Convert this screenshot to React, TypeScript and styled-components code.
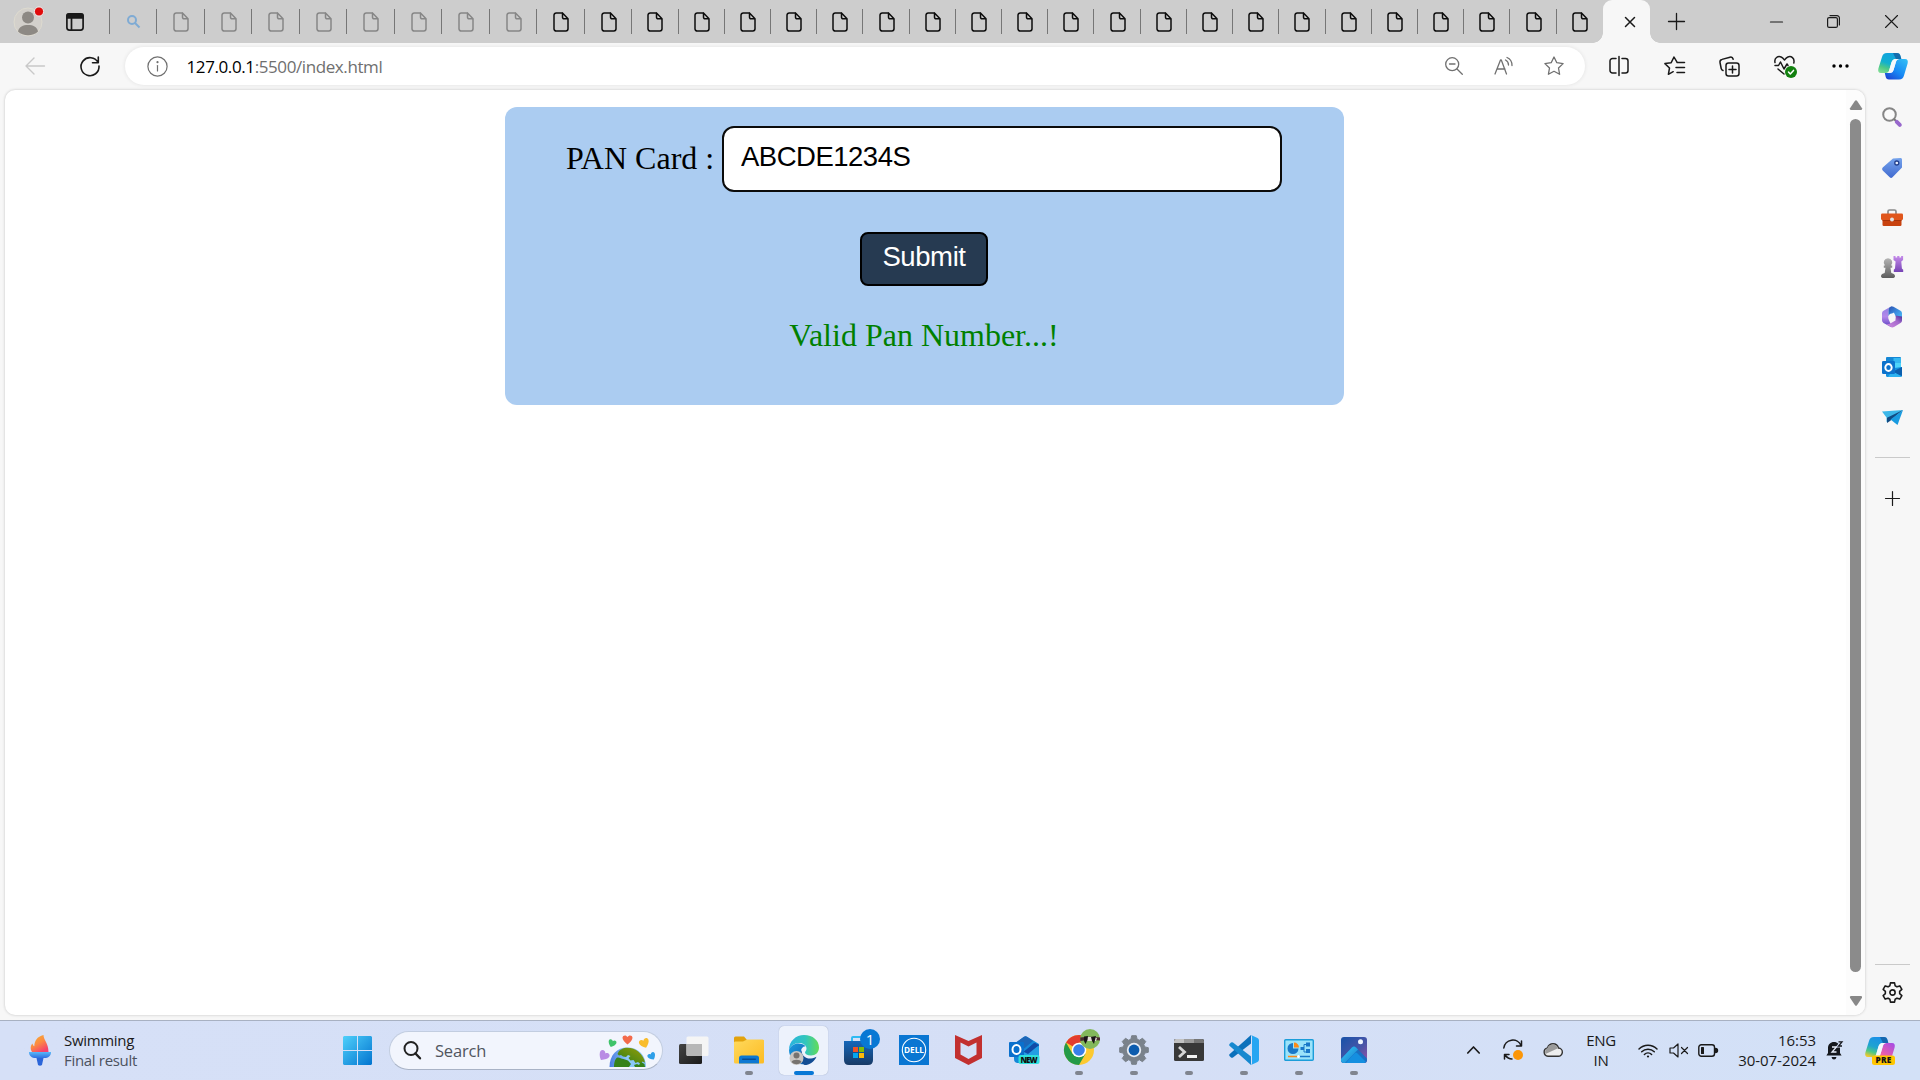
import React from "react";
import styled, { createGlobalStyle } from "styled-components";

const GlobalStyle = createGlobalStyle`
  * { box-sizing: border-box; }
  body { margin: 0; overflow: hidden; background: #f7f7f7; }
  svg { display: block; flex: none; overflow: visible; }
`;

const uiFont = `"Open Sans", "Noto Sans", sans-serif`;

const Desktop = styled.div`
  width: 1920px;
  height: 1080px;
  display: flex;
  flex-direction: column;
  overflow: hidden;
  background: #f7f7f7;
  font-family: ${uiFont};
  color: #1a1a1a;
`;

/* ---------- tab strip ---------- */
const TabStrip = styled.header`
  height: 43px;
  flex: none;
  display: flex;
  align-items: stretch;
  background: #cdcdcd;
`;
const Slot = styled.div<{ $w: number; $left?: number; $color?: string }>`
  width: ${(p) => p.$w}px;
  margin-left: ${(p) => p.$left ?? 0}px;
  color: ${(p) => p.$color ?? "inherit"};
  flex: none;
  display: flex;
  align-items: center;
  justify-content: center;
`;
const Tab = styled.div<{ $w: number; $faded?: boolean; $last?: boolean }>`
  width: ${(p) => p.$w}px;
  flex: none;
  display: flex;
  align-items: center;
  justify-content: center;
  color: ${(p) => (p.$faded ? "#868686" : "#0c0c0c")};
  background: linear-gradient(#767676, #767676) 100% 9px / ${(p) => (p.$last ? 0 : 1)}px 25px no-repeat;
`;
const FirstDivider = styled.div`
  width: 1px;
  height: 25px;
  margin: 9px 0 0 17px;
  flex: none;
  background: #767676;
`;
const ActiveTab = styled.div`
  position: relative;
  width: 47px;
  flex: none;
  display: flex;
  align-items: center;
  justify-content: center;
  padding-left: 8px;
  background: #f7f7f7;
  border-radius: 9px 9px 0 0;
  &::before,
  &::after {
    content: "";
    position: absolute;
    bottom: 0;
    width: 10px;
    height: 10px;
  }
  &::before {
    left: -10px;
    background: radial-gradient(circle at 0 0, transparent 9.5px, #f7f7f7 10px);
  }
  &::after {
    right: -10px;
    background: radial-gradient(circle at 100% 0, transparent 9.5px, #f7f7f7 10px);
  }
`;
const Spacer = styled.div`
  flex: 1;
`;

/* ---------- toolbar ---------- */
const Toolbar = styled.div`
  height: 47px;
  flex: none;
  display: flex;
  align-items: center;
  padding-bottom: 1px;
`;
const AddressBar = styled.div`
  width: 1460px;
  height: 38px;
  flex: none;
  display: flex;
  align-items: center;
  padding: 0 6px 0 22px;
  border-radius: 19px;
  background: #fff;
  box-shadow: 0 0 4px rgba(0, 0, 0, 0.09);
  color: #707070;
`;
const Url = styled.div`
  margin: 0 auto 0 18.5px;
  font-size: 17px;
  letter-spacing: -0.4px;
  color: #6f6f6f;
  white-space: nowrap;
  b {
    font-weight: 400;
    color: #000;
  }
`;

/* ---------- page ---------- */
const Middle = styled.div`
  height: 930px;
  flex: none;
  display: flex;
  padding-left: 5px;
`;
const Viewport = styled.main`
  width: 1860px;
  height: 925px;
  flex: none;
  display: flex;
  border-radius: 10px;
  overflow: hidden;
  background: #fff;
  box-shadow: 0 0 3px rgba(0, 0, 0, 0.22);
`;
const Page = styled.div`
  flex: 1;
  display: flex;
  justify-content: center;
  align-items: flex-start;
  padding: 17px 2px 0 0;
`;
const Card = styled.form`
  width: 839px;
  height: 298px;
  border-radius: 12px;
  background: #abccf1;
  display: flex;
  flex-direction: column;
  align-items: center;
  padding: 19px 1px 0 0;
  font-family: "Liberation Serif", serif;
  font-size: 32px;
`;
const Field = styled.label`
  width: 716px;
  display: flex;
  align-items: center;
  justify-content: space-between;
  color: #000;
  white-space: nowrap;
  > span {
    margin-top: -2px;
  }
`;
const PanInput = styled.input`
  width: 560px;
  height: 66px;
  border: 2px solid #0b0b0b;
  border-radius: 12px;
  background: #fff;
  padding: 0 17px 4px;
  font-family: "Liberation Sans", Arial, sans-serif;
  font-size: 27.5px;
  letter-spacing: -0.5px;
  color: #000;
  outline: 0;
`;
const SubmitButton = styled.button`
  width: 128px;
  height: 54px;
  margin-top: 40px;
  padding: 0 0 4px;
  border: 2px solid #000;
  border-radius: 8px;
  background: #263a51;
  color: #fff;
  font-family: "Liberation Sans", Arial, sans-serif;
  font-size: 27.5px;
  letter-spacing: -0.4px;
`;
const Message = styled.p`
  margin: 31px 0 0;
  line-height: 36px;
  color: #008000;
`;
const Scrollbar = styled.div`
  width: 19px;
  display: flex;
  flex-direction: column;
  align-items: center;
  padding: 10px 0 9px;
  background: #fcfcfc;
`;
const Thumb = styled.div`
  width: 11px;
  height: 853px;
  margin: 9px 0 auto;
  border-radius: 6px;
  background: #8b8b8b;
`;
const Sidebar = styled.aside`
  flex: 1;
  display: flex;
  flex-direction: column;
  align-items: center;
  padding: 2px 1px 0 0;
`;
const SideItem = styled.div<{ $h: number }>`
  height: ${(p) => p.$h}px;
  flex: none;
  display: flex;
  align-items: center;
  justify-content: center;
`;
const Rule = styled.div`
  width: 35px;
  height: 1px;
  flex: none;
  background: #cacaca;
`;

/* ---------- taskbar ---------- */
const Taskbar = styled.footer`
  height: 60px;
  flex: none;
  display: flex;
  align-items: center;
  padding-bottom: 1px;
  border-top: 1px solid #a8b1c2;
  background: linear-gradient(90deg, #d6e0f7, #d5dff6 60%, #d3e1f7);
`;
const Widget = styled.div`
  width: 313px;
  display: flex;
  align-items: center;
  gap: 13px;
  padding-left: 29px;
`;
const TwoLines = styled.div<{ $align?: string; $w?: number; $ls?: number }>`
  width: ${(p) => (p.$w ? p.$w + "px" : "auto")};
  text-align: ${(p) => p.$align ?? "left"};
  font-size: 15px;
  line-height: 20px;
  letter-spacing: ${(p) => p.$ls ?? -0.2}px;
  white-space: nowrap;
  flex: none;
  span {
    display: block;
  }
`;
const Muted = styled.span`
  color: #4c525e;
`;
const SearchBox = styled.div`
  width: 274px;
  height: 39px;
  margin-left: 3px;
  flex: none;
  display: flex;
  align-items: center;
  gap: 14px;
  padding: 0 6px 0 13px;
  border: 1px solid #c2cde0;
  border-bottom-color: #a9b3c6;
  border-radius: 20px;
  background: #f2f5fd;
  font-size: 16.5px;
  letter-spacing: -0.2px;
  color: #51555f;
  svg:last-child {
    margin: 2px 0 0 auto;
  }
`;
const Apps = styled.div`
  display: flex;
  gap: 6px;
  margin-left: 6px;
`;
const AppButton = styled.div<{ $active?: boolean }>`
  position: relative;
  width: 49px;
  height: 49px;
  display: flex;
  align-items: center;
  justify-content: center;
  border-radius: 5px;
  background: ${(p) => (p.$active ? "#edf2fc" : "transparent")};
  box-shadow: ${(p) => (p.$active ? "0 0 1px #8c9ab4" : "none")};
`;
const Indicator = styled.i<{ $active?: boolean }>`
  position: absolute;
  bottom: 0;
  left: 50%;
  transform: translateX(-50%);
  width: ${(p) => (p.$active ? 20 : 8)}px;
  height: 4px;
  border-radius: 2px;
  background: ${(p) => (p.$active ? "#0878d6" : "#80858f")};
`;
const Badge = styled.span`
  position: absolute;
  top: 3px;
  right: 3px;
  width: 20px;
  height: 20px;
  border-radius: 50%;
  background: #0878d4;
  color: #fff;
  font-size: 15px;
  line-height: 20px;
  text-align: center;
`;
const Tray = styled.div`
  margin-left: auto;
  padding-right: 14px;
  display: flex;
  align-items: center;
`;

/* ---------- drawings ---------- */
type SvgProps = { w: number; h: number; vb?: string; children: React.ReactNode; sw?: number };
const Line = ({ w, h, vb, children, sw = 1.4 }: SvgProps) => (
  <svg width={w} height={h} viewBox={vb ?? `0 0 ${w} ${h}`} fill="none" stroke="currentColor" strokeWidth={sw} strokeLinecap="round" strokeLinejoin="round">
    {children}
  </svg>
);
const Pic = ({ w, h, vb, children }: SvgProps) => (
  <svg width={w} height={h} viewBox={vb ?? `0 0 ${w} ${h}`}>{children}</svg>
);

const PageIcon = () => (
  <Line w={16} h={20} sw={1.5}>
    <path d="M9.500 1H3.200A2.200 2.200 0 0 0 1 3.200v13.600A2.200 2.200 0 0 0 3.200 19h9.600a2.200 2.200 0 0 0 2.200-2.200V6.800L9.500 1v4.300A1.500 1.500 0 0 0 11 6.800h4" />
  </Line>
);

const Profile = () => (
  <Pic w={30} h={30}>
    <circle cx="15" cy="15" r="14" fill="#d3d0cb" stroke="#dedbd0" />
    <circle cx="15" cy="10.500" r="6" fill="#8d8984" />
    <path d="M5 24.500c1-5 5-6.500 10-6.500s9 1.500 10 6.500c-5 5-15 5-20 0z" fill="#8d8984" />
    <circle cx="26" cy="4.500" r="4.600" fill="#e00b0b" stroke="#eee" />
  </Pic>
);

const Copilot = ({ pre }: { pre?: boolean }) => {
  const id = pre ? "p" : "c";
  return (
    <Pic w={30} h={29} vb="0 1 30 29">
      <defs>
        <linearGradient id={id + "a"} x1="0.600" y1="0" x2="0.200" y2="1">
          <stop offset="0" stopColor={pre ? "#1a8fe8" : "#12a2df"} />
          <stop offset="0.500" stopColor={pre ? "#1fa3d0" : "#10b0d0"} />
          <stop offset="0.750" stopColor="#4cc887" />
          <stop offset="1" stopColor={pre ? "#f4c92c" : "#7fdc94"} />
        </linearGradient>
        <linearGradient id={id + "b"} x1="1" y1="0" x2="0.200" y2="1">
          <stop offset="0" stopColor={pre ? "#a04be8" : "#35c2f5"} />
          <stop offset="0.600" stopColor={pre ? "#ef5fa8" : "#1789f5"} />
          <stop offset="1" stopColor={pre ? "#ff9b54" : "#1c49d4"} />
        </linearGradient>
      </defs>
      <path d="M9 2h10c2 0 3 1 3.500 3l.8 3H18c-3 0-4 2-4.700 4l-2 7c-.6 2-1.500 3-3.300 3H3c-2.500 0-3.300-2-2.600-4.500L4 6c.8-2.500 2-4 5-4z" fill={`url(#${id}a)`} />
      <path d="M15 2h4c2 0 3 1 3.500 3l.8 3H18z" fill="#145a9c" opacity=".75" />
      <path d="M21 28.500H11c-2 0-3-1-3.400-3L6.800 22H11c3 0 4-1 4.700-3.500l2.200-7.500c.6-2 1.600-3 3.600-3H27c2.500 0 3.300 2 2.600 4.500L26 24.500c-.8 2.500-2 4-5 4z" fill={`url(#${id}b)`} />
      <path d="M13.300 12c.7-2.500 2-4 4.700-4h3c-2 .3-2.600 1.500-3.100 3l-2.200 7.500C15 21 14 22 11 22H9c1.300-.4 2-1.300 2.300-3z" fill="#f5f8fb" />
      {pre && (
        <>
          <rect x="7" y="20.500" width="23" height="9.500" rx="2.500" fill="#ffc600" />
          <text x="18.500" y="28.200" textAnchor="middle" fontFamily="Open Sans" fontWeight="800" fontSize="8.200" letterSpacing="0.300" fill="#151515">PRE</text>
        </>
      )}
    </Pic>
  );
};

const gearPath = (n: number, r1: number, r2: number) => {
  const pts: string[] = [];
  for (let i = 0; i < n; i++) {
    const a = (i * 2 * Math.PI) / n - Math.PI / 2;
    const s = Math.PI / n;
    [[-0.72, r2], [-0.4, r1], [0.4, r1], [0.72, r2]].forEach(([k, r]) => {
      pts.push(`${(15 + Math.cos(a + k * s) * r).toFixed(2)} ${(15 + Math.sin(a + k * s) * r).toFixed(2)}`);
    });
  }
  return `M${pts.join("L")}Z`;
};

const TagIcon = () => (
  <Pic w={20} h={20}>
    <defs><linearGradient id="tag" x1="0" y1="0" x2="0" y2="1"><stop stopColor="#75a3ec" /><stop offset="1" stopColor="#426bd0" /></linearGradient></defs>
    <path d="M11 .6 18.500 0a1.400 1.400 0 0 1 1.500 1.500v8L10.500 19.200a2 2 0 0 1-2.800 0L.7 12.400a2 2 0 0 1 0-2.800z" fill="url(#tag)" />
    <circle cx="14.800" cy="5" r="2" fill="#e9f1ff" stroke="#24408c" strokeWidth="1.300" />
  </Pic>
);
const Toolbox = () => (
  <Pic w={22} h={17}>
    <path d="M7 5V2.500Q7 1 8.500 1h5Q15 1 15 2.500V5" fill="none" stroke="#8b8b8b" strokeWidth="1.700" />
    <rect x="1.500" y="8" width="19" height="9" rx="1.200" fill="#c8420f" />
    <rect x="0" y="4.500" width="22" height="6.500" rx="1.200" fill="#e0561c" />
    <rect x="1.500" y="11" width="19" height="1" fill="#a9340b" />
    <circle cx="11" cy="10.500" r="2" fill="#e1e1e1" />
  </Pic>
);
const Chess = () => (
  <Pic w={22} h={22}>
    <defs>
      <linearGradient id="rook" x1="0" y1="0" x2="0" y2="1"><stop stopColor="#c58bea" /><stop offset="1" stopColor="#7644b5" /></linearGradient>
      <linearGradient id="pawn" x1="0" y1="0" x2="0" y2="1"><stop stopColor="#b5b5b5" /><stop offset="1" stopColor="#5d5d5d" /></linearGradient>
    </defs>
    <path d="M12.500 0h2v1.500h1.700V0h2.200v1.500h1.700V0h2v4l-1.800 1.500.6 7 1.300 1.300V16h-9.400v-2.200l1.200-1.300.6-7L12.500 4z" fill="url(#rook)" />
    <path d="M7 2.200a4.200 4.200 0 0 1 3 7.200h1.200v2.400H9.500l.8 5.200c2 .3 3.700 1.500 3.700 3 0 1.400-1 2-2.500 2h-9C1 22 0 21.400 0 20c0-1.500 1.700-2.700 3.700-3l.8-5.200H2.800V9.400H4a4.200 4.200 0 0 1 3-7.200z" fill="url(#pawn)" />
  </Pic>
);
const M365 = () => (
  <Pic w={20} h={22}>
    <defs>
      <linearGradient id="ml" x1="0" y1="0" x2="0" y2="1"><stop stopColor="#8f7fe4" /><stop offset=".5" stopColor="#b489ea" /><stop offset="1" stopColor="#5b3fc0" /></linearGradient>
      <linearGradient id="mr" x1="0" y1="0" x2="1" y2="1"><stop stopColor="#2a4fae" /><stop offset=".5" stopColor="#3b8ee0" /><stop offset="1" stopColor="#4cc3f8" /></linearGradient>
      <linearGradient id="mb" x1="0" y1="1" x2="1" y2="0"><stop stopColor="#d08be0" /><stop offset=".6" stopColor="#a569cc" /><stop offset="1" stopColor="#46309b" /></linearGradient>
    </defs>
    <path d="M9 .4 6.500 3v10L10 21q-1 0-2-.5l-6.500-3.600Q0 16 0 14.300V7.200Q0 5.500 1.500 4.700z" fill="url(#ml)" />
    <path d="M6.500 10V3.500Q7 1 9.500.3q1.200 0 2 .4l7 4Q20 5.500 20 7.200V14l-6.500-3L12 6.500z" fill="url(#mr)" />
    <path d="M20 10.500v4q0 1.600-1.500 2.500L12 21q-2 1-4-.5l-3.500-2Q8 18 10 16.500l3.500-2v-5z" fill="url(#mb)" />
    <circle cx="10" cy="11" r="3.500" fill="#f7f7f7" />
  </Pic>
);
const OutlookArt = () => (
  <Pic w={20} h={20}>
    <rect x="4" y="0" width="15" height="13" rx="1" fill="#1587d5" />
    <path d="M11.500 1H19v5h-7.500z" fill="#35b8f1" /><path d="M11.500 6H19v5h-7.500z" fill="#4ed4fb" />
    <path d="M4 18.500V12l16-2v8.500q0 1.500-1.500 1.500h-13Q4 20 4 18.500z" fill="#1490df" />
    <path d="m10 15 10-5v9z" fill="#0b5fae" />
    <path d="m10 14 9.600 5.500-1.200.5H6z" fill="#2cb2f0" />
    <rect x="0" y="4" width="13" height="13" rx="1.300" fill="#0c72cc" />
    <ellipse cx="6.500" cy="10.500" rx="3.200" ry="3.500" fill="none" stroke="#fff" strokeWidth="1.900" />
  </Pic>
);
const Plane = () => (
  <Pic w={21} h={15}>
    <path d="M0 1.500 21 0 8 8.500 4.500 12V7.500z" fill="#3cb7e9" />
    <path d="M21 0 5 7.800V13l3-2z" fill="#114b83" />
    <path d="M21 0 8.500 9.500 15.500 15z" fill="#199be0" />
  </Pic>
);

const Torch = () => (
  <Pic w={22} h={31}>
    <defs>
      <linearGradient id="fl" x1="0" y1="0" x2="0.600" y2="1"><stop stopColor="#f6b42f" /><stop offset=".55" stopColor="#fb8a43" /><stop offset="1" stopColor="#f5426c" /></linearGradient>
      <linearGradient id="cup" x1="0" y1="0" x2="0" y2="1"><stop stopColor="#58b8f8" /><stop offset="1" stopColor="#2f6fe0" /></linearGradient>
    </defs>
    <path d="M14.500 0C14.500 5 19.500 8 19.500 17H3c-2-3-1.500-6.500.5-8.500.3 1.500.8 2.300 1.800 2.700C5.500 6 8 1.500 14.500 0z" fill="url(#fl)" />
    <path d="M0 17h22c0 4-3 6-6.500 6h-9C3 23 0 21 0 17z" fill="url(#cup)" />
    <path d="M7.500 23h7L13 30q-2 1.500-4 0z" fill="#2b65d9" />
  </Pic>
);
const WindowsLogo = () => (
  <Pic w={29} h={29}>
    <defs><linearGradient id="win" gradientUnits="userSpaceOnUse" x1="0" y1="0" x2="29" y2="29"><stop stopColor="#4fd0fb" /><stop offset="1" stopColor="#0274cf" /></linearGradient></defs>
    <path d="M1 0h13v14H0V1zM15 0h13l1 1v13H15zM0 15h14v14H1l-1-1zM15 15h14v13l-1 1H15z" fill="url(#win)" />
  </Pic>
);
const Heart = ({ x, y, s, c, r = 0 }: { x: number; y: number; s: number; c: string; r?: number }) => (
  <path transform={`translate(${x} ${y}) rotate(${r}) scale(${s})`} d="M0 4.500C-3 2.500-5-.2-5-2.200-5-5-1.300-5.500 0-3 1.300-5.500 5-5 5-2.200 5-.2 3 2.500 0 4.500z" fill={c} />
);
const Doodle = () => (
  <Pic w={57} h={32}>
    <defs>
      <linearGradient id="sea"><stop stopColor="#4a7be0" /><stop offset=".5" stopColor="#8fcbfa" /><stop offset="1" stopColor="#7dbff4" /></linearGradient>
      <linearGradient id="land" gradientUnits="userSpaceOnUse" x1="36" y1="12" x2="24" y2="32"><stop stopColor="#86990a" /><stop offset="1" stopColor="#2d7d19" /></linearGradient>
    </defs>
    <path d="M10.500 32C10.500 20 18 12.500 28.500 12.500S47 20 47 32z" fill="url(#sea)" />
    <path d="M20 16c2-2 5-3 7-3.300 5-.3 9 1 12.500 4 3.500 3 6 7 6.500 11l-2.500-1.200-2 2.500-2.500-2-2.500 1-2-3-3 .5-2-2.500 2-2-2.500-1-2 2-3-.5-2-1.500-2 .5-1.500-1.500z" fill="url(#land)" />
    <path d="M15 32c0-5 1.500-9 3.500-9.500 2-.5 3.500 1.500 6 1.500l4.500 1.500 3 3.500-2 3zM36 32l-1-2 3-1 2 1 2-3 3.500 2 .5 3z" fill="#35821a" />
    <Heart x={28.500} y={5} s={1} c="#f36a4b" />
    <Heart x={13} y={8.500} s={0.8} c="#3fc36a" r={20} />
    <Heart x={45.500} y={8.500} s={1} c="#f9bd2d" r={-20} />
    <Heart x={4.500} y={21} s={1.05} c="#b98be4" r={35} />
    <Heart x={53} y={21.500} s={0.8} c="#2f9fe8" r={-30} />
  </Pic>
);

const TaskView = () => (
  <Pic w={30} h={30}>
    <defs><linearGradient id="tv" x1="0" y1="0" x2="1" y2="1"><stop stopColor="#444" /><stop offset="1" stopColor="#1b1b1b" /></linearGradient></defs>
    <rect y="9" width="23" height="20" rx="1.500" fill="url(#tv)" />
    <rect x="7.500" y="1.500" width="22" height="19.500" rx="1.500" fill="#f5f5f5" />
    <path d="M7.500 9H23v12H9q-1.500 0-1.500-1.500z" fill="#b7b7b7" />
  </Pic>
);
const Folder = () => (
  <Pic w={30} h={28}>
    <defs><linearGradient id="fo" x1="0" y1="0" x2="1" y2="1"><stop stopColor="#ffd95c" /><stop offset="1" stopColor="#fcbb22" /></linearGradient></defs>
    <path d="M0 2Q0 .5 1.500.5H10L13 4h15.500Q30 4 30 5.500V10H0z" fill="#e2a20c" />
    <path d="M0 6.500Q0 5.500 1.500 5.500H9L13 3.500h15.500Q30 3.500 30 5v21q0 1.500-1.500 1.500h-27Q0 27.500 0 26z" fill="url(#fo)" />
    <path d="M5 27.500V22q0-2.500 2.500-2.500h15Q25 19.500 25 22v5.500z" fill="#0d78d2" />
    <rect x="8" y="22.500" width="14" height="1.500" rx=".7" fill="#084c95" />
  </Pic>
);
const Edge = () => (
  <Pic w={30} h={30}>
    <defs>
      <linearGradient id="e1"><stop stopColor="#2ab3e0" /><stop offset=".55" stopColor="#31c6bd" /><stop offset="1" stopColor="#64dc57" /></linearGradient>
      <linearGradient id="e2" x1="0" y1="0" x2="1" y2="1"><stop stopColor="#1b9cde" /><stop offset="1" stopColor="#0c5ab0" /></linearGradient>
    </defs>
    <path d="M0 15C0 6 7 0 15 0c9 0 15 5.500 15 12.500 0 5-3.500 8-8 8-4 0-6-1.500-6-3 0-1 1.500-1.600 1.500-4 0-3-3-5.500-7-5.500C5 8 1.500 11 0 15z" fill="url(#e1)" />
    <path d="M0 15c1.500-4 5-6.500 9.500-6.500 3 0 5.500 1 7 2.700-3 0-5 3-4.500 7 1 6 5 8.500 8 9.500-10 5-20-2.700-20-12.700z" fill="url(#e2)" />
    <path d="M12.500 15c0 6 4.500 9 9.500 8.500 2.500-.2 4-1 5.500-1.800C25.500 26.500 20.500 30 15.500 30 11 27 10 20 12.500 15z" fill="#134d93" />
    <circle cx="7.500" cy="23" r="7" fill="#c9c6c2" />
    <circle cx="7.500" cy="20.500" r="3" fill="#77736f" />
    <path d="M2.500 27c1-3 9-3 10 0-3 3-7 3-10 0z" fill="#77736f" />
  </Pic>
);
const Store = () => (
  <Pic w={29} h={30}>
    <defs><linearGradient id="st" x1="0" y1="0" x2="0" y2="1"><stop stopColor="#1667ba" /><stop offset="1" stopColor="#183a66" /></linearGradient></defs>
    <path d="M8 7V3q0-1 1-1h11q1 0 1 1v4" fill="none" stroke="#2ebaf2" strokeWidth="2" />
    <path d="M0 6h29v19q0 5-5 5H5q-5 0-5-5z" fill="url(#st)" />
    <path d="M9 12h5v5H9z" fill="#f35325" /><path d="M15 12h5v5h-5z" fill="#81bc06" /><path d="M9 18h5v5H9z" fill="#05a6f0" /><path d="M15 18h5v5h-5z" fill="#ffba08" />
  </Pic>
);
const Dell = () => (
  <Pic w={30} h={30}>
    <path d="M0 0h30v30H0z" fill="#0976d2" />
    <circle cx="15" cy="15" r="11.700" fill="none" stroke="#fff" strokeWidth="1.100" />
    <text x="15" y="17.800" textAnchor="middle" fontFamily="Open Sans" fontWeight="700" fontSize="8" textLength="20" lengthAdjust="spacingAndGlyphs" fill="#fff">DELL</text>
  </Pic>
);
const McAfee = () => (
  <Pic w={27} h={30}><path d="m0 0 13.500 6L27 0v23l-13.500 7L0 23zm5.500 7.500v12l8 4.500 8-4.500v-12l-8 4z" fill="#c2302f" fillRule="evenodd" /></Pic>
);
const OutlookNew = () => (
  <Pic w={30} h={28}>
    <path d="M5 8 15 .8q1.500-1 3 0L30 8v15q0 4-4 4H9q-4 0-4-4z" fill="#1488d8" />
    <path d="M5 8 15 .8q1.500-1 3 0L24 5 11 16H5z" fill="#1c66b8" />
    <path d="m13 17 13-10 4 2.500L18 22z" fill="#1047a1" /><path d="M13 17 30 9.500V24H13z" fill="#239fe3" /><path d="m15 16 10-9 5 2-11 9z" fill="#114ba7" />
    <rect y="6" width="15" height="15" rx="1" fill="#0a70cd" />
    <ellipse cx="7.500" cy="13.500" rx="4" ry="4.500" fill="none" stroke="#fff" strokeWidth="2" />
    <rect x="9.500" y="19" width="21" height="9" rx="2" fill="#2fe0dc" />
    <text x="20" y="26.500" textAnchor="middle" fontFamily="Open Sans" fontWeight="800" fontSize="7.800" textLength="17" fill="#101010">NEW</text>
  </Pic>
);
const Chrome = () => (
  <Pic w={30} h={30}>
    <circle cx="15" cy="15" r="15" fill="#fcc931" />
    <path d="M15 15 2 7.500A15 15 0 0 1 28 7.500H15z" fill="#e33b2e" />
    <path d="M2 7.500A15 15 0 0 0 15 30l6.500-11.300L15 15 8.500 18.700z" fill="#249a48" />
    <circle cx="15" cy="15" r="7.300" fill="#fff" /><circle cx="15" cy="15" r="5.800" fill="#397fe9" />
    <circle cx="26" cy="4" r="10" fill="#83b85b" />
    <path d="M16.200 2.500Q26 1 36 2.500v3q-10-1-19.700.500z" fill="#4a2c31" />
    <path d="M21 2h9l3 1-1 3H21z" fill="#e3ddd6" />
    <path d="m20 1.500 4-.5-.5 4-2 4-1.500-3zM27 2l5-1-1 4-1 4-2-3z" fill="#1b1518" />
  </Pic>
);
const SettingsApp = () => (
  <Pic w={30} h={30}>
    <path d={gearPath(8, 14.5, 11.2)} fill="#7a828b" stroke="#7a828b" strokeWidth="1" strokeLinejoin="round" />
    <circle cx="15" cy="15" r="7.200" fill="#e8edf5" /><circle cx="15" cy="15" r="5.400" fill="#0c5cae" />
  </Pic>
);
const Terminal = () => (
  <Pic w={30} h={22}>
    <rect width="30" height="22" rx="1.500" fill="#383838" />
    <path d="M1.500 0H10v4H0V1.500z" fill="#c2c2c2" /><path d="M10 0h10v4H10z" fill="#9b9b9b" /><path d="M20 0h8.500L30 1.500V4H20z" fill="#757575" />
    <path d="m5 8 5.500 5L5 18" fill="none" stroke="#d5d5d5" strokeWidth="2.800" /><path d="M13 16h10v3H13z" fill="#f2f2f2" />
  </Pic>
);
const VsCode = () => (
  <Pic w={30} h={30}>
    <path d="M22 0v8.500L4 22.500q-1 .7-2 0L.5 21q-.8-1 0-1.800z" fill="#0b70bb" />
    <path d="M22 30v-8.500L4 7.500q-1-.7-2 0L.5 9q-.8 1 0 1.800z" fill="#1688cf" />
    <path d="M22 0 28.500 3Q30 3.800 30 5.500v19q0 1.700-1.500 2.500L22 30q1-.8 1-2V2q0-1.200-1-2z" fill="#26a6f2" />
  </Pic>
);
const ControlPanel = () => (
  <Pic w={30} h={22}>
    <rect x=".7" y=".7" width="28.600" height="20.600" rx="1" fill="#9be3fa" stroke="#1b9dd9" strokeWidth="1.400" />
    <path d="M9 4v5.500h5.500A5.500 5.500 0 1 1 9 4z" fill="#1978c8" /><path d="M10 3.500a5 5 0 0 1 5 5h-5z" fill="#fb8a18" />
    <path d="M18 9h2V5.500h2M20 9v4h2" fill="none" stroke="#1978c8" /><path d="M22 3.500h4v4h-4zM22 10h4v4h-4zM16.500 8H20v3h-3.500z" fill="#1978c8" />
    <path d="M4 17.500h10" stroke="#fb8a18" strokeWidth="1.500" /><path d="M15 17.500h11" stroke="#1978c8" strokeWidth="1.500" /><circle cx="14.500" cy="17.500" r="1.500" fill="#fff" />
  </Pic>
);
const Photos = () => (
  <Pic w={26} h={26}>
    <defs>
      <linearGradient id="ph" x1="0" y1="0" x2="1" y2="1"><stop stopColor="#1752a8" /><stop offset=".6" stopColor="#4a55a8" /><stop offset="1" stopColor="#a04fa5" /></linearGradient>
      <linearGradient id="mt" x1="0" y1="0" x2="1" y2="1"><stop stopColor="#38cdf8" /><stop offset="1" stopColor="#1478cc" /></linearGradient>
    </defs>
    <rect width="26" height="26" rx="3" fill="url(#ph)" />
    <path d="m0 22 11-11.500q2-2 4 0L26 21.500V23q0 3-3 3H3q-2.500 0-3-2.500z" fill="#1a6fc2" />
    <path d="m0 22 11-11.500q2-2 4 0l2 2L4 26H3q-3 0-3-3z" fill="url(#mt)" />
    <path d="m10 20 4-4q1-1 2 0l9 9-2 1H5z" fill="#148fe0" />
    <circle cx="19.500" cy="4.800" r="2.500" fill="#eef5ff" />
  </Pic>
);

const taskApps: { art: React.ReactNode; state?: "open" | "active"; badge?: string }[] = [
  { art: <TaskView /> },
  { art: <Folder />, state: "open" },
  { art: <Edge />, state: "active" },
  { art: <Store />, badge: "1" },
  { art: <Dell /> },
  { art: <McAfee /> },
  { art: <OutlookNew /> },
  { art: <Chrome />, state: "open" },
  { art: <SettingsApp />, state: "open" },
  { art: <Terminal />, state: "open" },
  { art: <VsCode />, state: "open" },
  { art: <ControlPanel />, state: "open" },
  { art: <Photos />, state: "open" },
];

export default function App() {
  return (
    <Desktop>
      <GlobalStyle />
      <TabStrip>
        <Slot $w={30} $left={13}><Profile /></Slot>
        <Slot $w={34} $left={15}>
          <Line w={18} h={18} sw={1.7}>
            <rect x=".9" y=".9" width="16.200" height="16.200" rx="2.500" />
            <path d="M1 2.500Q1 1 2.500 1h13Q17 1 17 2.500V5H1z" fill="currentColor" />
            <path d="M5.500 5v12" />
          </Line>
        </Slot>
        <FirstDivider />
        <Tab $w={47.3} $faded>
          <svg width="13" height="13" viewBox="0 0 13 13" fill="none" stroke="#7fabd4" strokeWidth="2"><circle cx="5" cy="5" r="4" /><path d="m8 8 4.500 4.500" /></svg>
        </Tab>
        {Array.from({ length: 10 }, (_, i) => (
          <Tab key={i} $w={47.5} $faded={i < 8}><PageIcon /></Tab>
        ))}
        {Array.from({ length: 21 }, (_, i) => (
          <Tab key={i} $w={46.23} $last={i === 20}><PageIcon /></Tab>
        ))}
        <ActiveTab>
          <Line w={10} h={10} sw={1.5}><path d="m.5.5 9 9m0-9-9 9" /></Line>
        </ActiveTab>
        <Slot $w={54}><Line w={17} h={17} sw={1.3}><path d="M8.500.5v16M.5 8.500h16" /></Line></Slot>
        <Spacer />
        <Slot $w={57}><Line w={13} h={2} sw={1.2}><path d="M.5 1h12" /></Line></Slot>
        <Slot $w={57}>
          <Line w={13} h={13} sw={1.2}><rect x=".6" y="2.600" width="9.800" height="9.800" rx="1.500" /><path d="M3 .6h7a2.400 2.400 0 0 1 2.400 2.400v7" /></Line>
        </Slot>
        <Slot $w={58}><Line w={13} h={13} sw={1.1}><path d="m.5.5 12 12m0-12-12 12" /></Line></Slot>
      </TabStrip>

      <Toolbar>
        <Slot $w={70} $color="#c9c9c9">
          <Line w={20} h={18}><path d="M19.500 9H1M9 1 1 9l8 8" /></Line>
        </Slot>
        <Slot $w={40}>
          <Line w={20} h={20} sw={1.6}><path d="M18 6.500A9 9 0 1 0 19 10M18.300 1v5.800h-5.800" /></Line>
        </Slot>
        <Slot $w={15} />
        <AddressBar>
          <Line w={21} h={21} sw={1.2}><circle cx="10.500" cy="10.500" r="9.600" /><path d="M10.500 9.500v5.500" /><circle cx="10.500" cy="6.200" r=".5" fill="currentColor" /></Line>
          <Url><b>127.0.0.1</b>:5500/index.html</Url>
          <Slot $w={50}><Line w={18} h={18} sw={1.3}><circle cx="7.200" cy="7.200" r="6.500" /><path d="m12 12 5.300 5.300M4.500 7h5.500" /></Line></Slot>
          <Slot $w={50}><Line w={20} h={18} sw={1.3}><path d="m1 17 5.500-14h.8L12.500 17M3 12h8M11.500 3q3 1.500 3 5M13 .5q5 2 5 8" /></Line></Slot>
          <Slot $w={50}><Line w={20} h={20} sw={1.3}><path d="m10 1 2.800 5.700 6.300.9-4.600 4.400 1.100 6.300L10 15.300l-5.600 3 1.100-6.300L.9 7.600l6.300-.9z" /></Line></Slot>
        </AddressBar>
        <Slot $w={55.3} $left={6.5}><Line w={20} h={20} sw={1.5}><path d="M7 2.500H3.500A2.500 2.500 0 0 0 1 5v9.500A2.500 2.500 0 0 0 3.500 17H7M13 2.500h3.500A2.500 2.500 0 0 1 19 5v9.500a2.500 2.500 0 0 1-2.500 2.500H13M10 .5v19" /></Line></Slot>
        <Slot $w={55.3}><Line w={21} h={20} sw={1.5}><path d="m13 6.200L10 1 7.200 6.700l-6.300.9 4.600 4.400-1.100 6.300 4.800-2.600M13 6.500h7.500M12 11.500h8.500M13 16.500h7.500" /></Line></Slot>
        <Slot $w={55.3}><Line w={21} h={21} sw={1.5}><rect x="7" y="7" width="13" height="13" rx="2.500" /><path d="M13.500 10v7M10 13.500h7M4 14.500Q2.500 14 2.200 12.500L1 6.500Q.6 4 3 3.400l8-2.200q2.500-.6 3.200 2" /></Line></Slot>
        <Slot $w={55.3}>
          <Line w={22} h={22} sw={1.5}>
            <path d="M1 7.500C0 3 4 .5 7.200 2 9 2.700 10 4.300 10.500 5c.5-.7 1.500-2.300 3.300-3C17 .5 21 3 19.800 8M1 10.500h3.500l2-3.500 3.500 7 3-5 1 1.500M4 14l6 5" />
            <circle cx="17" cy="17" r="6" fill="#12800f" stroke="none" /><path d="m14.500 17 1.800 2 3.200-3.600" stroke="#fff" />
          </Line>
        </Slot>
        <Slot $w={55.3}><Pic w={17} h={4}><circle cx="2" cy="2" r="1.700" /><circle cx="8.500" cy="2" r="1.700" /><circle cx="15" cy="2" r="1.700" /></Pic></Slot>
        <Slot $w={51}><Copilot /></Slot>
      </Toolbar>

      <Middle>
        <Viewport>
          <Page>
            <Card onSubmit={(e) => e.preventDefault()}>
              <Field>
                <span>PAN Card :</span>
                <PanInput defaultValue="ABCDE1234S" />
              </Field>
              <SubmitButton type="button">Submit</SubmitButton>
              <Message>Valid Pan Number...!</Message>
            </Card>
          </Page>
          <Scrollbar>
            <Pic w={12} h={10}><path d="M5 .8q1-1.300 2 0l5 7.400q.6 1.500-1 1.800H1Q-.6 9.700 0 8.200z" fill="#888" /></Pic>
            <Thumb />
            <Pic w={12} h={10}><path d="M5 9.200q1 1.300 2 0l5-7.400Q12.600.3 11 0H1Q-.6.3 0 1.800z" fill="#888" /></Pic>
          </Scrollbar>
        </Viewport>
        <Sidebar>
          <SideItem $h={50}>
            <Pic w={20} h={20}><circle cx="7.500" cy="7.500" r="6.300" fill="#fafafa" stroke="#868686" strokeWidth="2" /><path d="m12 12 2 2" stroke="#777" strokeWidth="2" /><path d="m14.800 14.800 3 3" stroke="#9868cc" strokeWidth="4" strokeLinecap="round" /></Pic>
          </SideItem>
          <SideItem $h={51}><TagIcon /></SideItem>
          <SideItem $h={49}><Toolbox /></SideItem>
          <SideItem $h={50}><Chess /></SideItem>
          <SideItem $h={50}><M365 /></SideItem>
          <SideItem $h={50}><OutlookArt /></SideItem>
          <SideItem $h={51}><Plane /></SideItem>
          <SideItem $h={29}><Rule /></SideItem>
          <SideItem $h={52}><Line w={15} h={15} sw={1.2}><path d="M7.500.5v14M.5 7.500h14" /></Line></SideItem>
          <Spacer />
          <Rule />
          <SideItem $h={55}>
            <Line w={21} h={21} vb="-1 -1 32 32" sw={2.4}><path d={gearPath(6, 15, 11)} /><circle cx="15" cy="15" r="4" /></Line>
          </SideItem>
        </Sidebar>
      </Middle>

      <Taskbar>
        <Widget>
          <Torch />
          <TwoLines $ls={-0.32}><span>Swimming</span><Muted>Final result</Muted></TwoLines>
        </Widget>
        <Slot $w={29} $left={30}><WindowsLogo /></Slot>
        <Slot $w={14} />
        <SearchBox>
          <Line w={18} h={18} sw={2}><circle cx="8" cy="7.500" r="6.500" stroke="#222" /><path d="m12.500 12.500 4.500 4.800" stroke="#222" strokeWidth="2.400" /></Line>
          <span>Search</span>
          <Doodle />
        </SearchBox>
        <Apps>
          {taskApps.map((a, i) => (
            <AppButton key={i} $active={a.state === "active"}>
              {a.art}
              {a.state && <Indicator $active={a.state === "active"} />}
              {a.badge && <Badge>{a.badge}</Badge>}
            </AppButton>
          ))}
        </Apps>
        <Tray>
          <Slot $w={40}><Line w={13} h={8} sw={1.7}><path d="m.8 7 5.700-6 5.700 6" /></Line></Slot>
          <Slot $w={40}>
            <Line w={20} h={20} sw={1.5}><path d="M.8 8A9 9 0 0 1 18 5.500M18.500 1v5h-5M1.500 19v-4.500H6M2 15q3 4 7 4" /><circle cx="15" cy="15" r="5" fill="#fb9608" stroke="none" /></Line>
          </Slot>
          <Slot $w={40}>
            <Pic w={20} h={14}><path d="M5 13.200a4.200 4.200 0 0 1-.5-8.300C5.500 2 7.500.8 10 .8c2.700 0 4.800 1.500 5.500 4.200a4.100 4.100 0 0 1-.5 8.200z" fill="#eee" stroke="#333" strokeWidth="1.400" /><path d="M4.500 5C5.500 2 7.500 1.400 10 1.400c2.500 0 4 1.300 4.900 3.800L9 8 2.500 11Q1 7 4.500 5z" fill="#9b9b9b" /></Pic>
          </Slot>
          <TwoLines $w={56} $align="center" $ls={-0.3}><span>ENG</span><span>IN</span></TwoLines>
          <Slot $w={34} $left={2}>
            <Line w={20} h={15} sw={1.5}><path d="M1 6a12.700 12.700 0 0 1 18 0M3.700 8.800a9 9 0 0 1 12.600 0M6.400 11.500a5.200 5.200 0 0 1 7.200 0" /><circle cx="10" cy="13.500" r="1.100" fill="currentColor" stroke="none" /></Line>
          </Slot>
          <Slot $w={26}>
            <Line w={19} h={15} sw={1.2}><path d="M1 5h3.500L9 1v13l-4.500-4H1zM12.500 4.500l6 6m0-6-6 6" /></Line>
          </Slot>
          <Slot $w={34}>
            <Line w={20} h={13} sw={1.4}><rect x=".8" y=".8" width="15.700" height="11.400" rx="2.500" /><rect x="3" y="3" width="3" height="7" rx=".5" fill="currentColor" stroke="none" /><path d="M17.500 4.500q2 0 2 2t-2 2z" fill="currentColor" /></Line>
          </Slot>
          <TwoLines $w={91} $align="right" $ls={-0.05}><span>16:53</span><span>30-07-2024</span></TwoLines>
          <Slot $w={38}>
            <Pic w={18} h={19}>
              <path d="M8 1c3.500 0 6 2.500 6 6v5l1.600 2.500H.4L2 12V7c0-3.500 2.500-6 6-6zM5.500 16h5q-.5 2.500-2.500 2.500T5.500 16z" fill="#15181d" />
              <path d="M6 6h4.500L6 11h4.500" fill="none" stroke="#e9eefa" strokeWidth="1.300" />
              <path d="M12.500.8H16L12.500 5H16" fill="none" stroke="#d5dff6" strokeWidth="3" /><path d="M12.500.8H16L12.500 5H16" fill="none" stroke="#15181d" strokeWidth="1.300" />
            </Pic>
          </Slot>
          <Slot $w={52}><Copilot pre /></Slot>
        </Tray>
      </Taskbar>
    </Desktop>
  );
}
